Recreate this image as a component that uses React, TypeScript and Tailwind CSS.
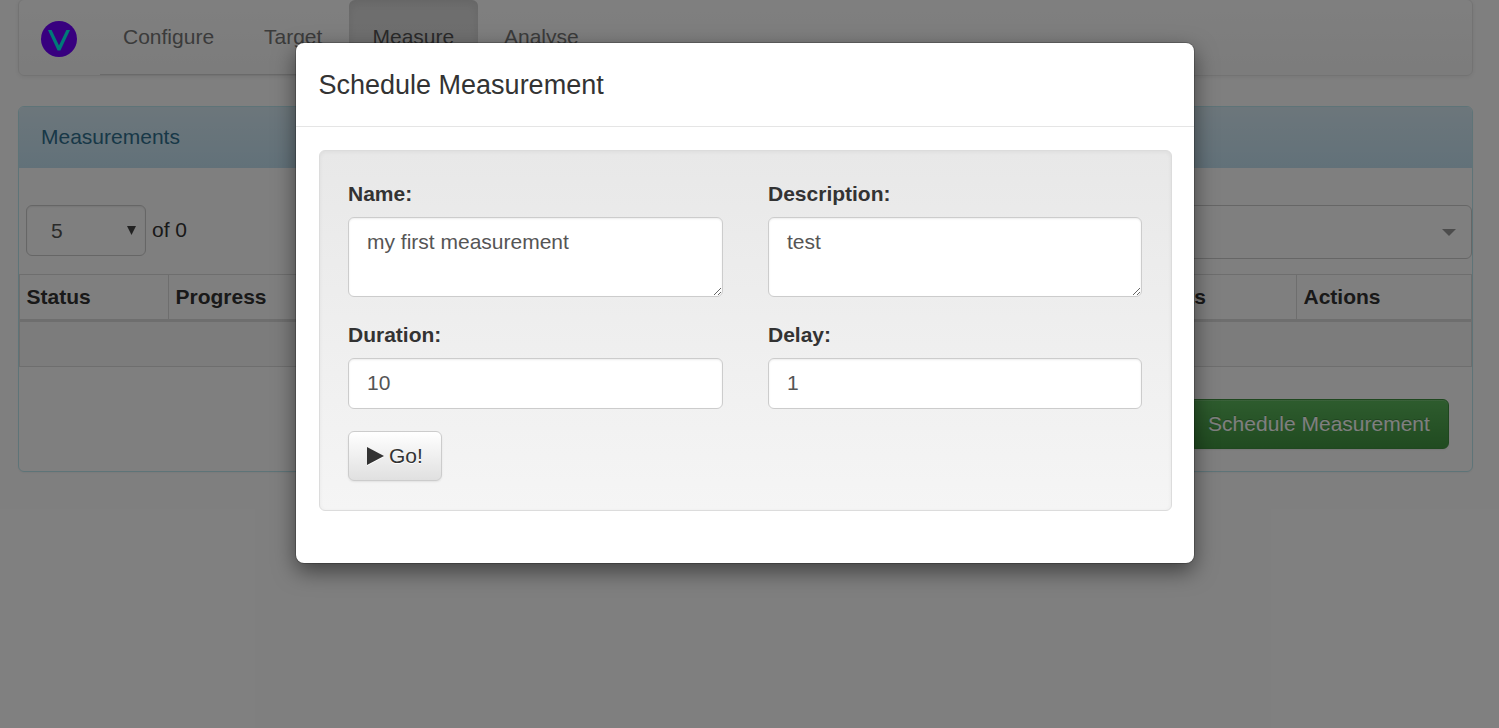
import React from "react";

const navItems = [
  { label: "Configure", cls: "w-[141px] pl-[23px] text-[#777]" },
  { label: "Target", cls: "w-[108px] pl-[23px] text-[#777]" },
  {
    label: "Measure",
    cls: "w-[129px] pl-[23.5px] text-[#555] rounded-md bg-linear-to-b from-[#dbdbdb] to-[#e2e2e2] shadow-[inset_0_3px_9px_rgba(0,0,0,0.075)]",
  },
  { label: "Analyse", cls: "w-[124px] pl-[26px] text-[#777]" },
];

const control =
  "block w-full rounded-md border border-[#ccc] bg-white px-[18px] text-[21px] leading-[30px] text-[#555] shadow-[inset_0_1px_2px_rgba(0,0,0,0.075)] outline-none";

const headCell = "border-b-3 border-[#ddd] p-0 leading-[30px]";

function Logo() {
  return (
    <svg className="block h-9 w-9" viewBox="0 0 36 36">
      <circle cx="18" cy="18" r="18" fill="#7000ff" />
      <path d="M7 9H10.6L18 24.4L25.4 9H29L19.4 29.5H16.6Z" fill="#00f5f0" />
    </svg>
  );
}

function Navbar() {
  return (
    <nav className="-mt-px flex h-[77px] rounded-md border border-[#e7e7e7] bg-linear-to-b from-white to-[#f8f8f8] shadow-[inset_0_1px_0_rgba(255,255,255,0.15),0_1px_5px_rgba(0,0,0,0.075)]">
      <div className="w-[81px] pt-[21px] pl-[22px]">
        <Logo />
      </div>
      <ul className="flex h-[75px] border-b border-[#d5d5d5]">
        {navItems.map((item) => (
          <li
            key={item.label}
            className={`h-[75px] pt-[22px] leading-[30px] [text-shadow:0_1px_0_rgba(255,255,255,0.25)] ${item.cls}`}
          >
            {item.label}
          </li>
        ))}
      </ul>
    </nav>
  );
}

function Panel() {
  return (
    <section className="mt-[30px] h-[366px] rounded-md border border-[#bce8f1] shadow-[0_1px_2px_rgba(0,0,0,0.05)]">
      <h2 className="h-[61px] rounded-t-[5px] bg-linear-to-b from-[#d9edf7] to-[#c4e3f3] pt-[15px] pl-[22px] leading-[30px] text-[#31708f]">
        Measurements
      </h2>
      <div className="flex h-[106px] justify-between pt-[37px]">
        <div className="flex items-start">
          <div className="ml-[7px] flex h-[51px] w-[120px] items-center justify-between rounded-md border border-[#ccc] pr-[9px] pl-6 text-[#555] shadow-[inset_0_1px_2px_rgba(0,0,0,0.075)]">
            <span>5</span>
            <svg className="h-[9px] w-[9px]" viewBox="0 0 9 9">
              <path d="M0 0H9L4.5 9Z" fill="#444" />
            </svg>
          </div>
          <span className="ml-1.5 pt-2.5 leading-[30px] text-[#333]">of 0</span>
        </div>
        <div className="flex h-[54px] w-[500px] items-center justify-end rounded-md border border-[#ccc] pr-[15px]">
          <svg className="h-[7px] w-[14px]" viewBox="0 0 14 7">
            <path d="M0 0H14L7 7Z" fill="#999" />
          </svg>
        </div>
      </div>
      <table className="h-[93px] w-full table-fixed border-separate border-spacing-0 border border-[#ddd] text-left text-[#333]">
        <thead>
          <tr className="h-[47px]">
            <th className={`w-[149px] border-r pl-[6.5px] ${headCell}`}>Status</th>
            <th className={`w-[210px] border-r pl-[6.5px] ${headCell}`}>Progress</th>
            <th className={`border-r pr-[90px] text-right ${headCell}`}>Results</th>
            <th className={`w-[174px] pl-[6.5px] ${headCell}`}>Actions</th>
          </tr>
        </thead>
        <tbody>
          <tr>
            <td colSpan={4} className="bg-[#f9f9f9] p-0" />
          </tr>
        </tbody>
      </table>
      <div className="flex justify-end pt-8 pr-[23px]">
        <button className="h-[50px] w-[260px] rounded-md border border-[#3e8f3e] bg-linear-to-b from-[#5cb85c] to-[#419641] text-white shadow-[inset_0_1px_0_rgba(255,255,255,0.15),0_1px_2px_rgba(0,0,0,0.075)] [text-shadow:0_-1px_0_rgba(0,0,0,0.2)]">
          Schedule Measurement
        </button>
      </div>
    </section>
  );
}

function Field({ label, children }: { label: string; children: React.ReactNode }) {
  return (
    <label className="block">
      <span className="mb-2 block leading-[30px] font-bold">{label}</span>
      {children}
    </label>
  );
}

function ScheduleDialog() {
  return (
    <div
      role="dialog"
      className="h-[520px] w-[898px] rounded-lg bg-white text-[#333] shadow-[0_0_0_1px_rgba(0,0,0,0.2),0_8px_22px_rgba(0,0,0,0.5)]"
    >
      <header className="h-[84px] border-b border-[#e5e5e5] pt-[23px] pl-[22.5px] text-[27px] leading-[39px]">
        Schedule Measurement
      </header>
      <div className="mt-[23px] mr-[22px] ml-[23px] h-[361px] rounded-md border border-[#dcdcdc] bg-linear-to-b from-[#e8e8e8] to-[#f5f5f5] pt-7 pr-[29px] pl-7 shadow-[inset_0_1px_4px_rgba(0,0,0,0.05),0_1px_0_rgba(255,255,255,0.1)]">
        <div className="grid grid-cols-[375px_374px] gap-x-[45px] gap-y-[23px]">
          <Field label="Name:">
            <textarea className={`${control} h-20 resize pt-[9px]`} defaultValue="my first measurement" />
          </Field>
          <Field label="Description:">
            <textarea className={`${control} h-20 resize pt-[9px]`} defaultValue="test" />
          </Field>
          <Field label="Duration:">
            <input className={`${control} h-[51px] pb-0.5`} defaultValue="10" />
          </Field>
          <Field label="Delay:">
            <input className={`${control} h-[51px] pb-0.5`} defaultValue="1" />
          </Field>
        </div>
        <button className="mt-[22px] flex h-[50px] w-[94px] items-center rounded-md border border-[#ccc] bg-linear-to-b from-white to-[#e0e0e0] pb-px pl-[18px] shadow-[inset_0_1px_0_rgba(255,255,255,0.15),0_1px_2px_rgba(0,0,0,0.075)] [text-shadow:0_1px_0_#fff]">
          <svg className="mr-[5px] h-[18px] w-[17px] drop-shadow-[0_1px_0_#fff]" viewBox="0 0 17 18">
            <path d="M0 0L17 9L0 18Z" fill="#333" />
          </svg>
          Go!
        </button>
      </div>
    </div>
  );
}

export default function App() {
  return (
    <div className="relative h-[728px] w-full overflow-hidden bg-white font-['Liberation_Sans',Arial,sans-serif] text-[21px] leading-[30px]">
      <main className="flow-root pr-[26px] pl-[18px]">
        <Navbar />
        <Panel />
      </main>
      <div className="absolute inset-0 flex items-start bg-black/50 pt-[43px] pl-[296px]">
        <ScheduleDialog />
      </div>
    </div>
  );
}
